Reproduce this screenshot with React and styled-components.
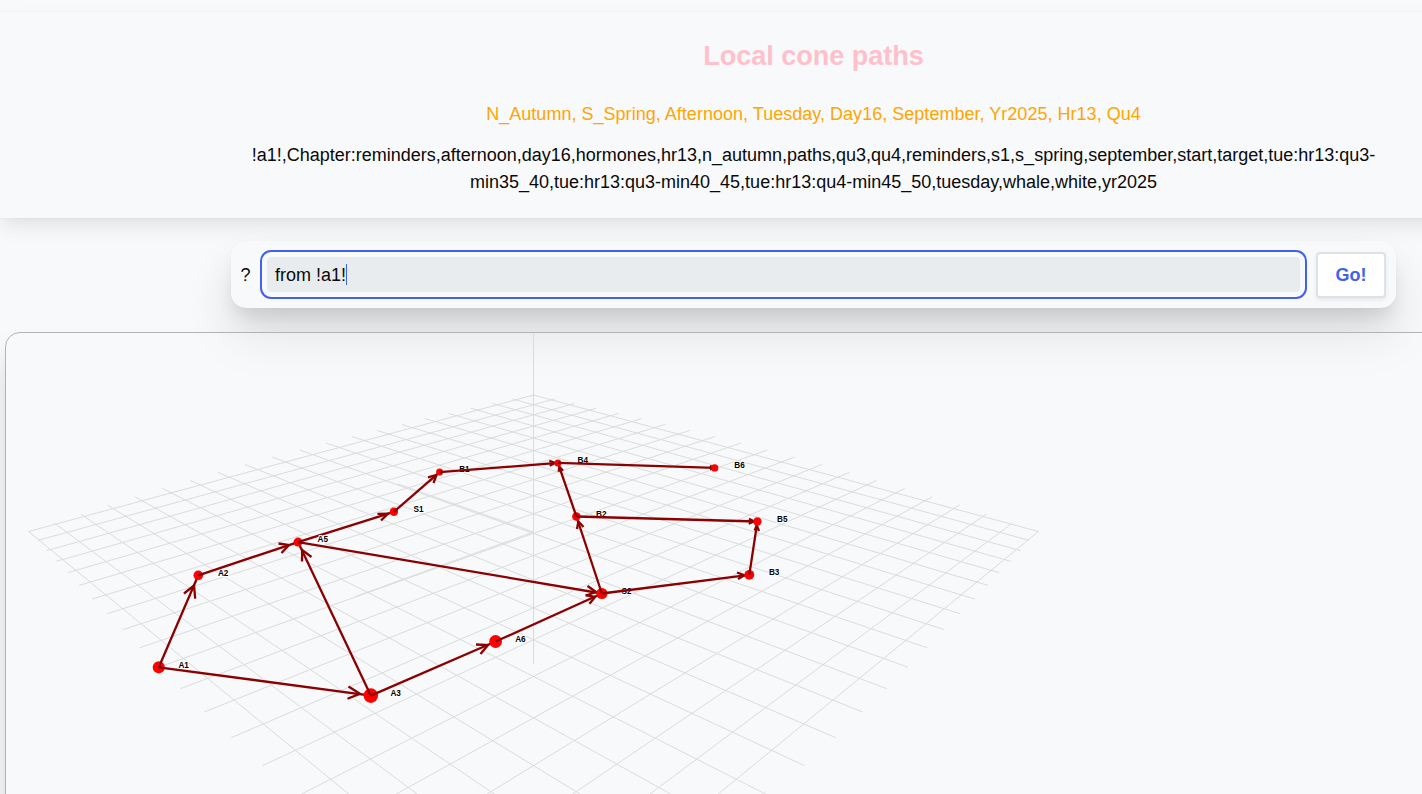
import React from "react";
import styled, { createGlobalStyle } from "styled-components";

const Global = createGlobalStyle`
  html, body { margin: 0; height: 794px; overflow: hidden; background: #f8f9fb; }
  body { font: 18px/27px "Liberation Sans", Arial, sans-serif; color: #0a0a0a; }
  * { box-sizing: border-box; }
`;

const Viewport = styled.div`
  width: 100%;
  height: 794px;
  overflow: hidden;
`;

const Page = styled.div`
  width: 1627px;
  height: 794px;
  overflow: hidden;
  display: flex;
  flex-direction: column;
  padding-top: 12px;
`;

const Header = styled.header`
  height: 206px;
  flex: none;
  display: flex;
  flex-direction: column;
  align-items: center;
  text-align: center;
  padding-top: 24px;
  box-shadow: 0 0 2px rgba(0, 0, 0, 0.06), 0 10px 20px -3px rgba(0, 0, 0, 0.1);
`;

const Title = styled.h1`
  margin: 0;
  font-size: 27px;
  line-height: 41px;
  font-weight: 700;
  color: pink;
`;

const Moment = styled.div`
  margin-top: 24px;
  letter-spacing: 0.025px;
  color: orange;
`;

const Context = styled.div`
  margin-top: 14px;
  width: 1165px;
`;

const SearchBar = styled.form`
  flex: none;
  width: 1165px;
  height: 67px;
  margin: 23px 0 0 231px;
  padding: 9px 10px 9px 9px;
  display: flex;
  align-items: center;
  gap: 9px;
  border-radius: 15px;
  background: #f8f9fb;
  box-shadow: 0 0 2px rgba(0, 0, 0, 0.03), 0 12px 18px -5px rgba(0, 0, 0, 0.1),
    0 28px 46px rgba(0, 0, 0, 0.12);
`;

const Prompt = styled.span`
  width: 11px;
  padding-top: 1px;
  text-align: center;
`;

const FocusRing = styled.div`
  flex: 1;
  height: 49px;
  padding: 5px;
  border: 2px solid #4361e8;
  border-radius: 11px;
`;

const Field = styled.div`
  height: 35px;
  padding: 1px 8px 0;
  display: flex;
  align-items: center;
  border-radius: 4px;
  background: #e9ecef;
`;

const Caret = styled.span`
  width: 1px;
  height: 21px;
  margin-top: -1px;
  background: #4361e8;
`;

const GoButton = styled.button`
  width: 70px;
  height: 46px;
  padding: 1px 0 0;
  border: 2px solid #dee1e7;
  border-radius: 4px;
  background: #fff;
  color: #4361e8;
  font: 700 18px/27px "Liberation Sans", Arial, sans-serif;
  box-shadow: 0 2px 4px rgba(0, 0, 0, 0.07);
`;

const CanvasPanel = styled.main`
  flex: none;
  width: 1620px;
  height: 700px;
  margin: 24px 0 0 5px;
  border: 1px solid #b0b4b7;
  border-radius: 15px;
  background: rgba(248, 249, 251, 0.35);
  box-shadow: 0 22px 30px rgba(0, 0, 0, 0.13);
  overflow: hidden;
`;

const Plot = styled.svg`
  display: block;
`;

const Label = styled.text`
  font: 700 8.2px "Liberation Sans", Arial, sans-serif;
  text-rendering: optimizeSpeed;
  fill: #000;
  stroke: #fff;
  stroke-width: 2px;
  paint-order: stroke;
`;

const AXIS_X = 533.5;

const GRID = [
  [533.5, 395, 1038.5, 531.5],
  [512.5, 399, 1029, 540.3],
  [492.5, 403.4, 1020.7, 550.7],
  [471, 408.3, 1010.7, 561.3],
  [448.5, 413.4, 999.3, 572.7],
  [425.6, 418.7, 987.7, 585.3],
  [401.8, 424.4, 974.7, 599],
  [377, 430.4, 960, 613.7],
  [351.8, 436.5, 944.3, 629.7],
  [326, 443, 927, 647.7],
  [299.7, 450, 907.7, 667],
  [272.3, 457, 886.7, 688.7],
  [245, 464.5, 862.7, 712],
  [217.7, 472.3, 835.7, 737.7],
  [190.3, 480.4, 804.7, 765.7],
  [162.3, 488.4, 770, 796.3],
  [134.7, 496.7, 732, 828],
  [107.3, 505, 690, 861.3],
  [81, 514.3, 648, 898],
  [54.5, 523, 587, 921],
  [28.5, 531.5, 533.5, 945.5],
];

const NODES = [
  { id: "A1", x: 158.8, y: 667.3, r: 6.1 },
  { id: "A2", x: 198.3, y: 575.3, r: 4.8 },
  { id: "A3", x: 370.8, y: 695.6, r: 7.3 },
  { id: "A5", x: 298, y: 542.1, r: 4.5 },
  { id: "A6", x: 495.6, y: 641.5, r: 6.4 },
  { id: "S1", x: 393.9, y: 511.8, r: 4.2 },
  { id: "S2", x: 601.9, y: 593.5, r: 5.6 },
  { id: "B1", x: 439.6, y: 472.1, r: 3.5 },
  { id: "B2", x: 576.4, y: 516.5, r: 4.3 },
  { id: "B4", x: 557.9, y: 462.9, r: 3.5 },
  { id: "B3", x: 749.3, y: 574.8, r: 4.9 },
  { id: "B5", x: 757.4, y: 521.5, r: 4.2 },
  { id: "B6", x: 714.7, y: 467.9, r: 3.6 },
];

// Each edge: source, target, then the arrow head as wing, tip, wing.
const EDGES = [
  ["A1", "A2", "184,593.5 194,585.5 195.2,598.6"],
  ["A1", "A3", "348.5,686.5 360,693.7 347.5,698.8"],
  ["A2", "A5", "278.5,543.5 289,545 281.5,553"],
  ["A3", "A5", "302,561.5 302.2,550 311.5,557"],
  ["A3", "A6", "476,644.5 488,645 480.5,654"],
  ["A5", "S1", "377.5,513.8 388,513.6 381,520.5"],
  ["A5", "S2", "587.5,586 596,592 586,595.5"],
  ["A6", "S2", "585.5,595 595,597 589.5,603.7"],
  ["S1", "B1", "428,477.3 436.5,475 433.5,483"],
  ["S2", "B2", "577,529 578.4,521.5 583.5,527"],
  ["S2", "B3", "737,572.5 744.5,575.3 738,579"],
  ["B1", "B4", "549.3,460.7 555,463 549.7,465.8"],
  ["B2", "B4", "558.6,471.8 559.5,467 563,470.8"],
  ["B2", "B5", "749,518.8 754,521.4 748.7,523.8"],
  ["B4", "B6", "710,465.8 713,467.8 710,469.6"],
  ["B3", "B5", "754.6,530.5 756.8,525.5 759,531"],
];

const nodeById = Object.fromEntries(NODES.map((n) => [n.id, n]));

function Grid() {
  return (
    <g stroke="#dadcdb" strokeWidth="1" fill="none">
      {GRID.map(([x1, y1, x2, y2], k) => (
        <g key={k}>
          <line x1={x1} y1={y1} x2={x2} y2={y2} />
          <line x1={2 * AXIS_X - x1} y1={y1} x2={2 * AXIS_X - x2} y2={y2} />
        </g>
      ))}
      <polyline points="398,484 533.5,532 357,596" />
      <line x1={AXIS_X} y1="333" x2={AXIS_X} y2="664" />
    </g>
  );
}

function NodeLabel({ node }) {
  return (
    <Label x={node.x + 19.6} y={node.y + 0.2}>
      {node.id}
    </Label>
  );
}

function Edge({ edge: [from, to, head] }) {
  const a = nodeById[from];
  const b = nodeById[to];
  return (
    <>
      <line x1={a.x} y1={a.y} x2={b.x} y2={b.y} />
      <polyline points={head} />
    </>
  );
}

// A label lies over its node's upward branch and under every other edge.
function Graph() {
  return (
    <g fill="none" stroke="#8b0000" strokeWidth="2.3">
      {NODES.map((n) => (
        <NodeLabel key={n.id} node={n} />
      ))}
      {NODES.map((n) => {
        const edges = EDGES.filter(([from]) => from === n.id);
        const under = edges.filter(([, to]) => to === "S1");
        const over = edges.filter(([, to]) => to !== "S1");
        return (
          <g key={n.id}>
            <circle cx={n.x} cy={n.y} r={n.r} fill="red" stroke="none" />
            {under.map((e) => (
              <Edge key={e[1]} edge={e} />
            ))}
            {under.length > 0 && <NodeLabel node={n} />}
            {over.map((e) => (
              <Edge key={e[1]} edge={e} />
            ))}
          </g>
        );
      })}
    </g>
  );
}

export default function App() {
  return (
    <Viewport>
      <Global />
      <Page>
        <Header>
          <Title>Local cone paths</Title>
          <Moment>
            N_Autumn, S_Spring, Afternoon, Tuesday, Day16, September, Yr2025, Hr13, Qu4
          </Moment>
          <Context>
            !a1!,Chapter:reminders,afternoon,day16,hormones,hr13,n_autumn,paths,qu3,qu4,reminders,s1,s_spring,september,start,target,tue:hr13:qu3-min35_40,tue:hr13:qu3-min40_45,tue:hr13:qu4-min45_50,tuesday,whale,white,yr2025
          </Context>
        </Header>
        <SearchBar>
          <Prompt>?</Prompt>
          <FocusRing>
            <Field>
              from !a1!
              <Caret />
            </Field>
          </FocusRing>
          <GoButton type="button">Go!</GoButton>
        </SearchBar>
        <CanvasPanel>
          <Plot width="1618" height="461" viewBox="6 333 1618 461">
            <Grid />
            <Graph />
          </Plot>
        </CanvasPanel>
      </Page>
    </Viewport>
  );
}
